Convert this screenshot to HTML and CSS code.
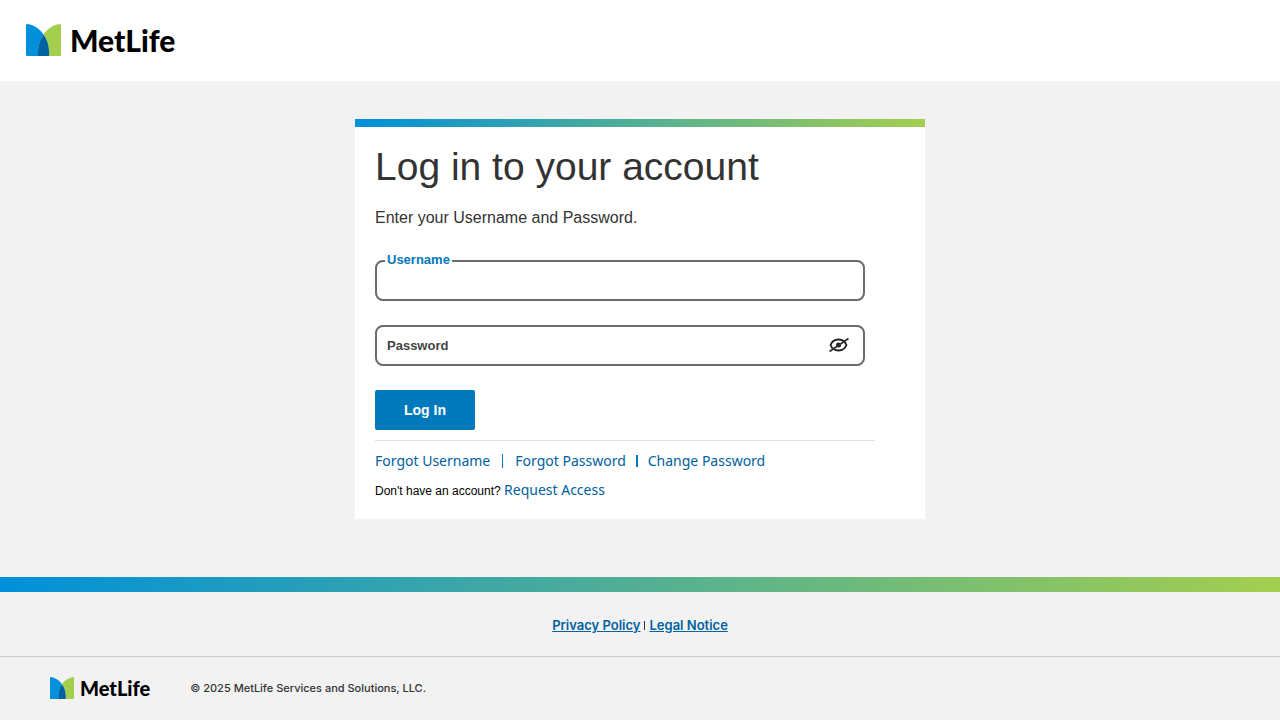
FILE: index.html
```html
<!DOCTYPE html>
<html lang="en">
<head>
<meta charset="utf-8">
<meta name="viewport" content="width=device-width, initial-scale=1">
<title>MetLife - Log in</title>
<link rel="stylesheet" href="styles.css">
</head>
<body>
<header class="site-header">
  <div class="logo">
    <svg class="logo-mark" viewBox="0 0 35 32" aria-hidden="true">
      <path fill="#0090da" d="M0 1.200Q0 0 1.500 0C8 1 14 5 17.500 10.500C14 16 12 21 12 32H1.200Q0 32 0 30.800Z"/>
      <path fill="#a4ce4e" d="M35 1.200Q35 0 33.500 0C27 1 21 5 17.500 10.500C21 16 23 21 23 32H33.800Q35 32 35 30.800Z"/>
      <path fill="#0061a0" d="M17.500 10.500C21.500 16 23.500 23 23 32H12C11.500 23 13.500 16 17.500 10.500Z"/>
    </svg>
    <span class="logo-word">MetLife</span>
  </div>
</header>
<main class="main">
  <section class="card">
    <h1 class="title">Log in to your account</h1>
    <p class="intro">Enter your Username and Password.</p>
    <form class="form">
      <div class="field">
        <input class="field-input" id="username" type="text">
        <label class="field-label field-label-raised" for="username">Username</label>
      </div>
      <div class="field">
        <input class="field-input" id="password" type="password">
        <label class="field-label" for="password">Password</label>
        <button class="reveal" type="button" aria-label="Show password">
          <svg class="reveal-icon" viewBox="0 0 20 16" aria-hidden="true">
            <path fill="none" stroke="#1a1a1a" stroke-width="1.800" d="M1.500 8C3 4.200 6 2.500 9.500 2.500S16 4.200 17.500 8C16 11.800 13 13.500 9.500 13.500S3 11.800 1.500 8Z"/>
            <circle cx="9.500" cy="8" r="2.500" fill="#1a1a1a"/>
            <path stroke="#333" stroke-width="2" d="M.5 14.500L19.500 1.500"/>
          </svg>
        </button>
      </div>
      <button class="submit" type="submit">Log In</button>
    </form>
    <nav class="links">
      <a class="link" href="#">Forgot Username</a>
      <span class="bar bar-tall"></span>
      <a class="link" href="#">Forgot Password</a>
      <span class="bar bar-bold"></span>
      <a class="link" href="#">Change Password</a>
    </nav>
    <p class="request">Don't have an account? <a class="link" href="#">Request Access</a></p>
  </section>
</main>
<footer class="footer">
  <nav class="legal">
    <a class="legal-link" href="#">Privacy Policy</a>
    <span class="legal-bar"></span>
    <a class="legal-link" href="#">Legal Notice</a>
  </nav>
  <div class="footer-bottom">
    <div class="logo logo-small">
      <svg class="logo-mark" viewBox="0 0 35 32" aria-hidden="true">
        <path fill="#0090da" d="M0 1.200Q0 0 1.500 0C8 1 14 5 17.500 10.500C14 16 12 21 12 32H1.200Q0 32 0 30.800Z"/>
        <path fill="#a4ce4e" d="M35 1.200Q35 0 33.500 0C27 1 21 5 17.500 10.500C21 16 23 21 23 32H33.800Q35 32 35 30.800Z"/>
        <path fill="#0061a0" d="M17.500 10.500C21.500 16 23.500 23 23 32H12C11.500 23 13.500 16 17.500 10.500Z"/>
      </svg>
      <span class="logo-word">MetLife</span>
    </div>
    <p class="copyright">© 2025 MetLife Services and Solutions, LLC.</p>
  </div>
</footer>
</body>
</html>
```
FILE: styles.css
```css
* {
  box-sizing: border-box;
}

body {
  margin: 0;
  min-height: 100vh;
  display: flex;
  flex-direction: column;
  background: #f2f2f2;
  color: #333;
  font-family: "Liberation Sans", Arial, sans-serif;
}

.site-header {
  padding: 24px 26px 25px;
  background: #fff;
}

.logo {
  display: flex;
  align-items: center;
  gap: 9px;
  color: #000;
}

.logo-mark {
  display: block;
  width: 35px;
  height: 32px;
}

.logo-word {
  font: 900 30px/32px Lato, sans-serif;
}

.logo-small {
  gap: 6px;
}

.logo-small .logo-mark {
  width: 24px;
  height: 22px;
}

.logo-small .logo-word {
  font-size: 20px;
  line-height: 22px;
}

.main {
  padding: 38px 20px 58px;
}

.card {
  max-width: 570px;
  margin: 0 auto;
  padding: 16px 50px 18px 20px;
  background: linear-gradient(to right, #0090da, #a4ce4e) top / 100% 8px no-repeat #fff;
}

.title {
  margin: 8px 0 0;
  font-size: 39px;
  font-weight: 400;
  line-height: 48px;
}

.intro {
  margin: 17px 0 0;
  font-size: 16px;
  line-height: 20px;
}

.form {
  display: flex;
  flex-direction: column;
  align-items: flex-start;
  gap: 24px;
  margin-top: 32px;
  padding-bottom: 10px;
  border-bottom: 1px solid #e0e0e0;
}

.field {
  position: relative;
  align-self: stretch;
  margin-right: 10px;
}

.field-input {
  display: block;
  width: 100%;
  height: 41px;
  padding: 0 44px 0 10px;
  border: 2px solid #6b6b6b;
  border-radius: 8px;
  background: #fff;
  font: inherit;
}

.field-label {
  position: absolute;
  top: 13px;
  left: 10px;
  padding: 0 2px;
  background: #fff;
  color: #444;
  font-size: 13px;
  font-weight: 700;
  line-height: 16px;
}

.field-label-raised {
  top: -8px;
  color: #007abc;
}

.reveal {
  position: absolute;
  top: 12px;
  right: 16px;
  padding: 0;
  border: 0;
  background: none;
}

.reveal-icon {
  display: block;
  width: 20px;
  height: 16px;
}

.submit {
  width: 100px;
  height: 40px;
  border: 0;
  border-radius: 2px;
  background: #007abc;
  color: #fff;
  font: 700 14px/20px "Liberation Sans", Arial, sans-serif;
}

.links {
  display: flex;
  align-items: center;
  margin-top: 10px;
}

.link {
  color: #0061a0;
  font: 14px/20px "Noto Sans", sans-serif;
  text-decoration: none;
}

.bar {
  width: 1px;
  height: 12px;
  background: #007abc;
}

.bar-tall {
  height: 14px;
  margin: 0 12px;
}

.bar-bold {
  width: 2px;
  margin: 0 10px;
}

.request {
  margin: 9px 0 0;
  color: #000;
  font-size: 12px;
  line-height: 20px;
}

.footer {
  background: linear-gradient(to right, #0090da, #a4ce4e) top / 100% 15px no-repeat;
  padding-top: 15px;
}

.legal {
  display: flex;
  justify-content: center;
  align-items: center;
  gap: 4px;
  padding: 25px 20px 23px;
}

.legal-link {
  color: #0061a0;
  font: 600 13px/16px Inter, sans-serif;
}

.legal-bar {
  width: 1px;
  height: 9px;
  background: #333;
}

.footer-bottom {
  display: flex;
  align-items: center;
  gap: 40px;
  padding: 20px 50px 21px;
  border-top: 1px solid #ccc;
}

.copyright {
  margin: 0;
  font: 500 11px/16px Inter, sans-serif;
}
```
